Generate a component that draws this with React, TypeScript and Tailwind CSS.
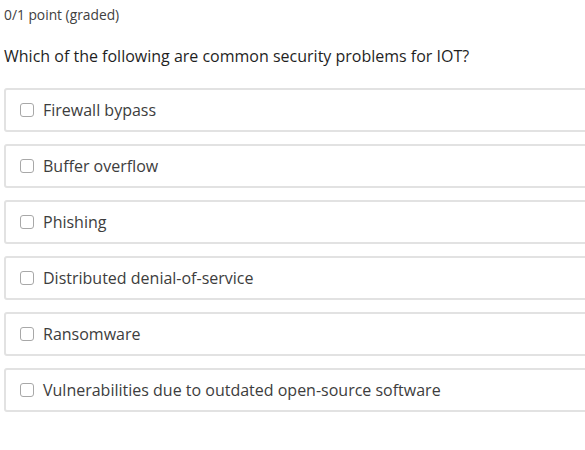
import React from "react";

const options = [
  "Firewall bypass",
  "Buffer overflow",
  "Phishing",
  "Distributed denial-of-service",
  "Ransomware",
  "Vulnerabilities due to outdated open-source software",
];

export default function App() {
  return (
    <div
      className="w-[585px] h-[450px] overflow-hidden bg-white pl-[4px]"
      style={{ fontFamily: '"Open Sans", "Noto Sans", sans-serif' }}
    >
      <div className="pt-[5px] text-[13.8px] leading-[20px] text-[#414141]">0/1 point (graded)</div>
      <div className="mt-[19px] text-[16px] leading-[24px] text-[#1f1f1f]">
        Which of the following are common security problems for IOT?
      </div>
      <div className="mt-[20px] flex flex-col gap-[12px] w-[600px]">
        {options.map((o) => (
          <label
            key={o}
            className="flex items-center h-[44px] border-2 border-[#e2e2e2] rounded-[3px] pl-[14px]"
          >
            <span className="w-[14px] h-[14px] border border-[#a8a8a8] rounded-[3px] bg-white shrink-0" />
            <span className="ml-[9px] text-[16px] leading-[24px] text-[#3d3d3d]">{o}</span>
          </label>
        ))}
      </div>
    </div>
  );
}
